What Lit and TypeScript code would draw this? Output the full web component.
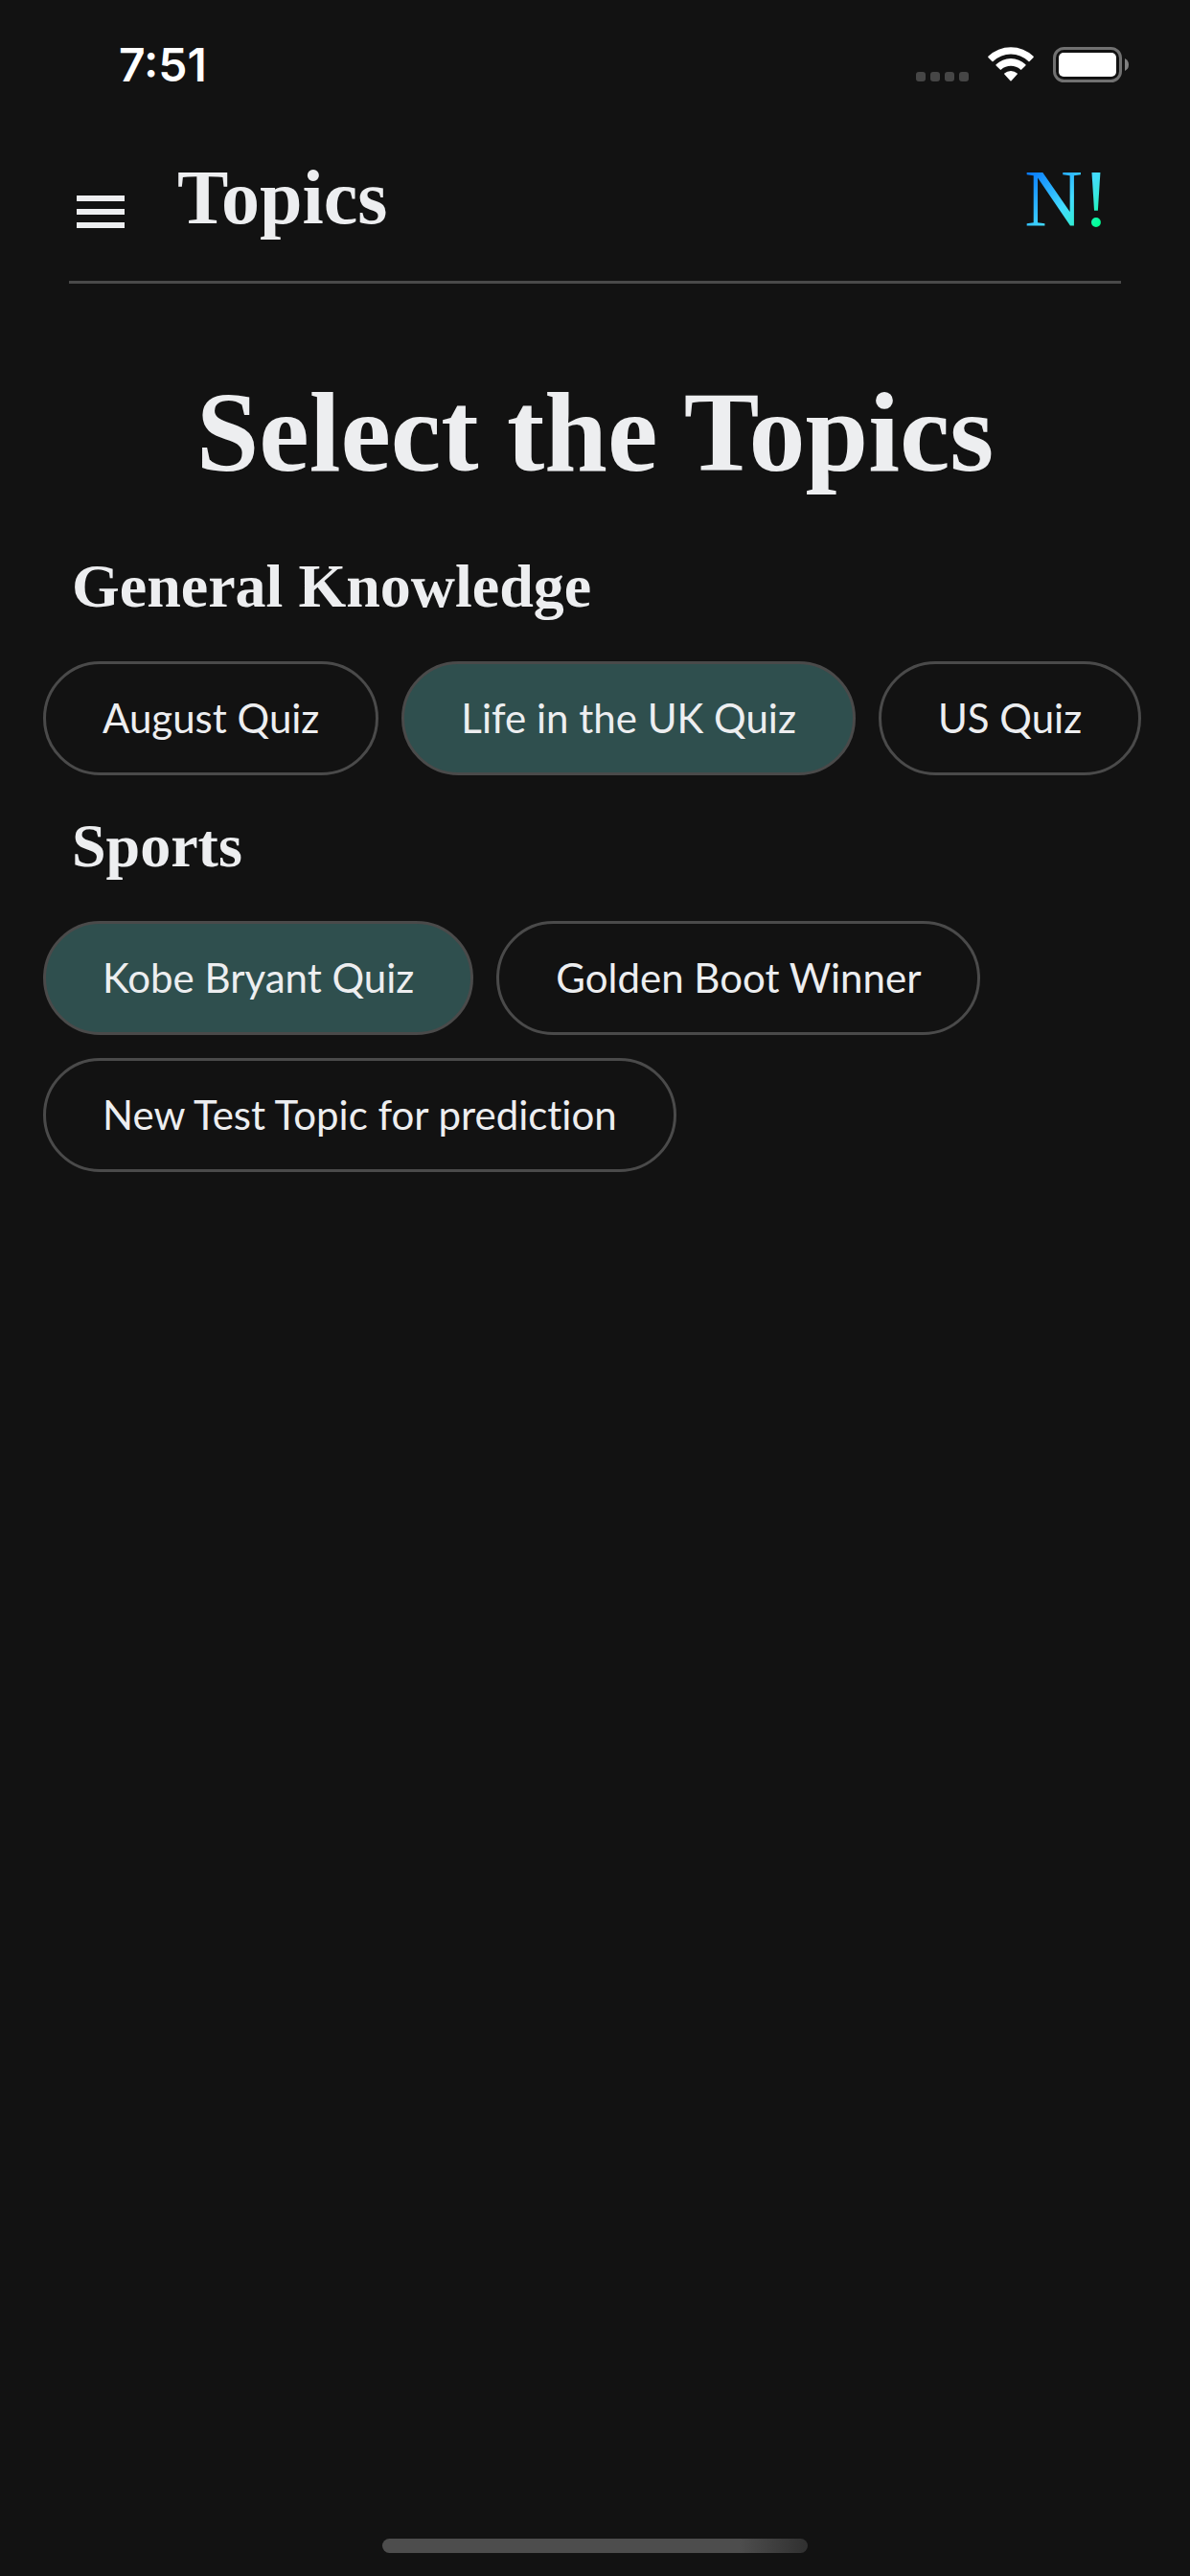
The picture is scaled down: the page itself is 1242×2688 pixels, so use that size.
import { LitElement, html, css } from "lit";
import { customElement, property, state } from "lit/decorators.js";
import { classMap } from "lit/directives/class-map.js";

interface Topic {
  name: string;
  selected: boolean;
}

interface TopicGroup {
  title: string;
  topics: Topic[];
}

@customElement("status-bar")
class StatusBar extends LitElement {
  static styles = css`
    :host {
      display: block;
    }
    .bar {
      display: flex;
      justify-content: space-between;
      align-items: flex-start;
      box-sizing: border-box;
      min-height: 132px;
      padding: 40px 64px 0 124px;
      color: #ffffff;
    }
    .time {
      font: 600 48px/56px Inter, "Liberation Sans", sans-serif;
    }
    .indicators {
      display: flex;
      align-items: flex-end;
      gap: 20px;
      padding-top: 9px;
    }
    .icon {
      display: block;
    }
  `;

  render() {
    return html`
      <div class="bar">
        <span class="time">7:51</span>
        <div class="indicators">
          <svg class="icon" width="55" height="37" viewBox="0 0 55 37" fill="#464646" aria-hidden="true">
            <rect x="0" y="26" width="10" height="10" rx="3" />
            <rect x="15" y="26" width="10" height="10" rx="3" />
            <rect x="30" y="26" width="10" height="10" rx="3" />
            <rect x="45" y="26" width="10" height="10" rx="3" />
          </svg>
          <svg class="icon" width="48" height="37" viewBox="0 0 48 37" fill="#ffffff" aria-hidden="true">
            <path d="M0.4 9.8 Q0 10.4 0.4 10.9 L4.4 15 Q5 15.5 5.6 15 A26.5 26.5 0 0 1 42.4 15 Q43 15.5 43.6 15 L47.6 10.9 Q48 10.4 47.6 9.8 A34 34 0 0 0 0.4 9.8 Z" />
            <path d="M8.6 18.3 Q8.1 18.9 8.6 19.4 L12.8 23.6 Q13.4 24.2 14 23.6 A15.2 15.2 0 0 1 34 23.6 Q34.6 24.2 35.2 23.6 L39.4 19.4 Q39.9 18.9 39.4 18.3 A22 22 0 0 0 8.6 18.3 Z" />
            <path d="M17.3 27.4 Q16.8 28 17.3 28.5 L23.4 35.3 Q24 35.9 24.6 35.3 L30.7 28.5 Q31.2 28 30.7 27.4 A10.2 10.2 0 0 0 17.3 27.4 Z" />
          </svg>
          <svg class="icon" width="79" height="37" viewBox="0 0 79 37" aria-hidden="true">
            <rect x="1.5" y="1.5" width="69" height="34" rx="10" fill="none" stroke="#717171" stroke-width="3" />
            <rect x="6" y="6" width="60" height="25" rx="5" fill="#ffffff" />
            <path d="M75 12 Q79 14 79 18.5 Q79 23 75 25 Z" fill="#808080" />
          </svg>
        </div>
      </div>
    `;
  }
}

@customElement("topic-chip")
class TopicChip extends LitElement {
  @property() label = "";
  @property({ type: Boolean }) selected = false;

  static styles = css`
    :host {
      display: block;
    }
    .chip {
      display: block;
      margin: 0;
      padding: 30px 59px;
      border: 3px solid #4a4a4a;
      border-radius: 60px;
      background: transparent;
      color: #edeef0;
      font: 400 42px/53px Lato, "Liberation Sans", sans-serif;
      font-variant-ligatures: none;
      white-space: nowrap;
      cursor: pointer;
    }
    .selected {
      background: #2f4f4e;
    }
  `;

  render() {
    return html`
      <button
        type="button"
        class=${classMap({ chip: true, selected: this.selected })}
        aria-pressed=${this.selected ? "true" : "false"}
      >${this.label}</button>
    `;
  }
}

@customElement("app-root")
class AppRoot extends LitElement {
  @state() private groups: TopicGroup[] = [
    {
      title: "General Knowledge",
      topics: [
        { name: "August Quiz", selected: false },
        { name: "Life in the UK Quiz", selected: true },
        { name: "US Quiz", selected: false },
      ],
    },
    {
      title: "Sports",
      topics: [
        { name: "Kobe Bryant Quiz", selected: true },
        { name: "Golden Boot Winner", selected: false },
        { name: "New Test Topic for prediction", selected: false },
      ],
    },
  ];

  static styles = css`
    :host {
      display: block;
    }
    .screen {
      display: flex;
      flex-direction: column;
      min-height: 100vh;
      background: #121212;
      color: #edeef0;
      font-family: "Liberation Serif", serif;
    }
    .header {
      display: flex;
      align-items: flex-end;
      margin: 0 72px;
      padding: 30px 12px 43px 0;
      border-bottom: 3px solid #4a4a4a;
    }
    .menu {
      display: block;
      margin: 0 47px 0 0;
      padding: 8px 8px 12px;
      border: 0;
      background: transparent;
      color: inherit;
      cursor: pointer;
    }
    .menu-icon {
      display: block;
    }
    .page {
      flex: 1;
      margin: 0;
      font-size: 80px;
      line-height: 88px;
      font-weight: 700;
    }
    .logo {
      font-size: 84px;
      line-height: 84px;
      color: transparent;
      background: linear-gradient(135deg, #0a7cff 12%, #43dcff 52%, #34ead8 68%, #00ff94 84%);
      -webkit-background-clip: text;
      background-clip: text;
      text-decoration: none;
    }
    .content {
      flex: 1;
      padding: 86px 45px 0;
    }
    .title {
      margin: 0 0 50px;
      font-size: 118px;
      line-height: 140px;
      font-weight: 700;
      text-align: center;
    }
    .group {
      margin: 0 0 34px;
    }
    .group-title {
      margin: 0 30px 38px;
      font-size: 64px;
      line-height: 80px;
      font-weight: 700;
    }
    .chips {
      display: flex;
      flex-wrap: wrap;
      gap: 24px;
    }
    .home {
      align-self: center;
      width: 444px;
      height: 15px;
      margin-bottom: 24px;
      border-radius: 8px;
      background: linear-gradient(90deg, #4d4d4d 84%, #303030);
    }
  `;

  private toggle(topic: Topic) {
    topic.selected = !topic.selected;
    this.groups = [...this.groups];
  }

  render() {
    return html`
      <div class="screen">
        <status-bar></status-bar>
        <header class="header">
          <button class="menu" type="button" aria-label="Menu">
            <svg class="menu-icon" width="50" height="34" viewBox="0 0 50 34" fill="currentColor" aria-hidden="true">
              <rect y="0" width="50" height="6" />
              <rect y="14" width="50" height="6" />
              <rect y="28" width="50" height="6" />
            </svg>
          </button>
          <h1 class="page">Topics</h1>
          <a class="logo" href="#">N!</a>
        </header>
        <main class="content">
          <h2 class="title">Select the Topics</h2>
          ${this.groups.map(
            (group) => html`
              <section class="group">
                <h3 class="group-title">${group.title}</h3>
                <div class="chips">
                  ${group.topics.map(
                    (topic) => html`
                      <topic-chip
                        .label=${topic.name}
                        .selected=${topic.selected}
                        @click=${() => this.toggle(topic)}
                      ></topic-chip>
                    `
                  )}
                </div>
              </section>
            `
          )}
        </main>
        <div class="home"></div>
      </div>
    `;
  }
}
